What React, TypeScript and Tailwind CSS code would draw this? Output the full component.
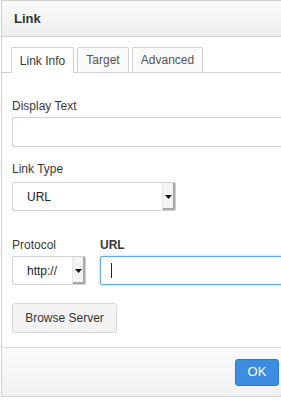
import React from "react";

function FakeSelect({ width, value }: { width: string; value: string }) {
  return (
    <div className={`${width} h-[29px] flex border border-[#d1d1d1] rounded-[2px] bg-white`}>
      <div className="flex-1 flex items-center pl-[14px] text-[12px] text-[#222]">{value}</div>
      <div className="w-[13px] flex items-center justify-center bg-[#f3f3f3] border-l border-[#e6e6e6] shadow-[inset_-2px_-2px_0_#a8a8a8]">
        <svg width="7" height="4" viewBox="0 0 7 4" className="-ml-[2px]">
          <path d="M0 0 L7 0 L3.5 4 Z" fill="#111" />
        </svg>
      </div>
    </div>
  );
}

export default function App() {
  return (
    <div
      className="w-[281px] h-[402px] bg-white overflow-hidden"
      style={{ fontFamily: '"Liberation Sans", Arial, sans-serif' }}
    >
      <div className="ml-px w-[300px] h-[397px] flex flex-col border-l border-t border-b border-[#d1d1d1] bg-white">
        {/* Title */}
        <div className="h-[36px] shrink-0 flex items-center pl-[12px] bg-gradient-to-b from-[#f9f9f9] to-[#eeeeee] border-b border-[#d1d1d1]">
          <span className="text-[13px] font-bold text-[#333] leading-none">Link</span>
        </div>
        {/* Tabs */}
        <div className="h-[36px] shrink-0 flex items-end pl-[9px] gap-[3px] border-b border-[#d1d1d1]">
          <div className="w-[63px] h-[26px] -mb-px flex items-center justify-center border border-b-0 border-[#d1d1d1] rounded-t-[2px] bg-white text-[12px] text-[#383838]">
            Link Info
          </div>
          <div className="w-[52px] h-[25px] flex items-center justify-center border border-b-0 border-[#d1d1d1] rounded-t-[2px] bg-[#fafafa] text-[12px] text-[#555]">
            Target
          </div>
          <div className="w-[71px] h-[25px] flex items-center justify-center border border-b-0 border-[#d1d1d1] rounded-t-[2px] bg-[#fafafa] text-[12px] text-[#555]">
            Advanced
          </div>
        </div>
        {/* Body */}
        <div className="flex-1 flex flex-col pl-[10px] pt-[25px] text-[12px] text-[#383838]">
          <div className="leading-[16px]">Display Text</div>
          <div className="mt-[3px] h-[30px] w-[300px] border border-[#d1d1d1] rounded-[2px] bg-white" />
          <div className="mt-[14px] leading-[16px]">Link Type</div>
          <div className="mt-[5px]">
            <FakeSelect width="w-[164px]" value="URL" />
          </div>
          <div className="mt-[26px] flex gap-[14px]">
            <div className="flex flex-col">
              <div className="leading-[16px]">Protocol</div>
              <div className="mt-[3px]">
                <FakeSelect width="w-[74px]" value="http://" />
              </div>
            </div>
            <div className="flex flex-col flex-1">
              <div className="leading-[16px] font-bold">URL</div>
              <div className="mt-[3px] h-[29px] w-[200px] flex items-center pl-[10px] border border-[#5fa6e6] rounded-[2px] bg-white shadow-[0_0_3px_#a9d0f2]">
                <div className="w-px h-[15px] bg-[#222]" />
              </div>
            </div>
          </div>
          <div className="mt-[18px]">
            <div className="w-[105px] h-[30px] flex items-center justify-center border border-[#d6d6d6] rounded-[3px] bg-[#f3f3f3] text-[12px] text-[#333]">
              Browse Server
            </div>
          </div>
        </div>
        {/* Footer */}
        <div className="h-[49px] shrink-0 flex items-center bg-gradient-to-b from-[#fafafa] to-[#f1f1f1] border-t border-[#d8d8d8] pl-[233px]">
          <div className="w-[44px] h-[27px] flex items-center justify-center bg-[#3c8de0] border border-[#2d78c8] rounded-[3px] text-[13px] text-white">
            OK
          </div>
        </div>
      </div>
    </div>
  );
}
